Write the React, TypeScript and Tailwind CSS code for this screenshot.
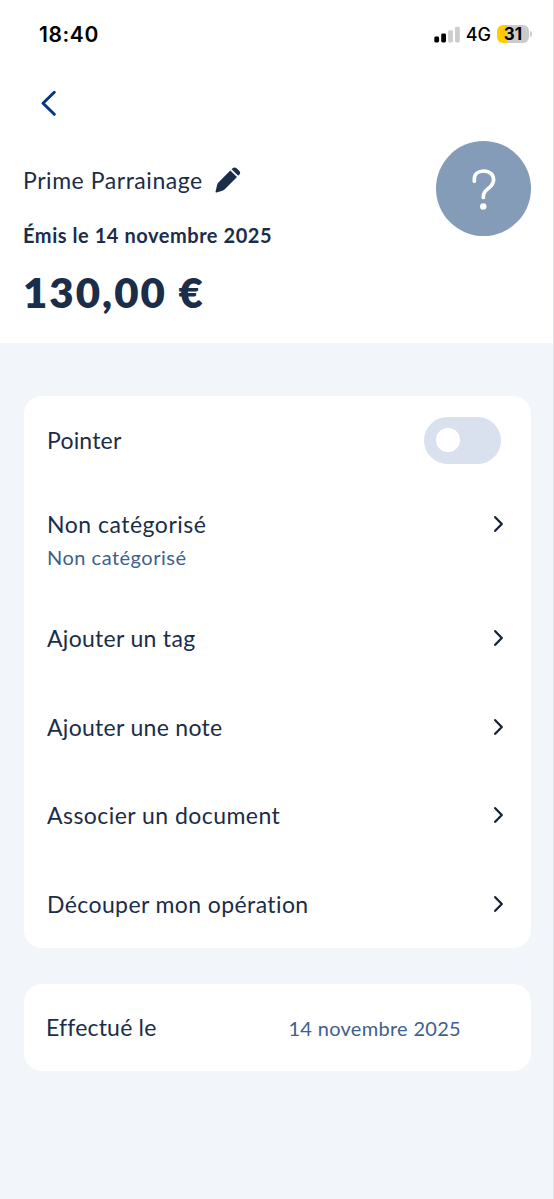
import React from 'react';

type Action = {
  label: string;
  detail?: string;
  rowClass: string;
  labelClass: string;
};

const actions: Action[] = [
  { label: 'Non catégorisé', detail: 'Non catégorisé', rowClass: 'h-[109.5px] items-start pt-[22px]', labelClass: 'tracking-[0.5px]' },
  { label: 'Ajouter un tag', rowClass: 'h-[88.5px] items-center', labelClass: 'tracking-[0.3px]' },
  { label: 'Ajouter une note', rowClass: 'h-[88.5px] items-center', labelClass: 'tracking-[0.3px]' },
  { label: 'Associer un document', rowClass: 'h-[88.5px] items-center', labelClass: 'tracking-[0.45px]' },
  { label: 'Découper mon opération', rowClass: 'h-[88.5px] items-center', labelClass: 'tracking-[0.4px]' },
];

const ChevronRight = () => (
  <svg width="12" height="18" viewBox="0 0 12 18" fill="none" className="shrink-0">
    <path d="M2.2 2.2 8.8 9l-6.6 6.8" stroke="#14223a" strokeWidth="2.3" strokeLinecap="round" strokeLinejoin="round" />
  </svg>
);

const StatusBar = () => (
  <div className="flex h-[68px] items-center justify-between pl-[39px] pr-[21px] font-['Inter',sans-serif] text-black">
    <span className="text-[21px] font-semibold leading-none tracking-[0.6px]">18:40</span>
    <div className="flex items-center">
      <svg width="26" height="17" viewBox="0 0 26 17">
        <rect x="0.3" y="10.5" width="4.8" height="6" rx="1.4" fill="#000" />
        <rect x="7.2" y="7.5" width="4.8" height="9" rx="1.4" fill="#000" />
        <rect x="14.1" y="4.3" width="4.8" height="12.2" rx="1.4" fill="#cdcdcd" />
        <rect x="21" y="0.8" width="4.8" height="15.7" rx="1.4" fill="#cdcdcd" />
      </svg>
      <span className="ml-[6px] mt-[2px] text-[18px] font-medium leading-none">4G</span>
      <div className="ml-[6px] flex items-center">
        <div className="flex h-[18px] w-[32px] items-center justify-center rounded-[6px] bg-[linear-gradient(to_right,#ffcc02_31%,#cbcbcb_31%)]">
          <span className="text-[17px] font-bold leading-none">31</span>
        </div>
        <div className="ml-[1px] h-[6px] w-[2px] rounded-r-full bg-[#cbcbcb]" />
      </div>
    </div>
  </div>
);

const Header = () => (
  <header className="h-[343px] bg-white">
    <StatusBar />
    <div className="flex h-[70px] items-center pl-[40px]">
      <svg width="18" height="28" viewBox="0 0 18 28" fill="none">
        <path d="M14.3 3.3 3 14.3l11.3 11" stroke="#003883" strokeWidth="3" strokeLinecap="round" strokeLinejoin="round" />
      </svg>
    </div>
    <div className="flex justify-between pl-[23px] pr-[22px] pt-[3px]">
      <div className="pt-[22px]">
        <div className="flex h-[34px] items-center">
          <h1 className="whitespace-nowrap text-[23px] leading-[34px] tracking-[0.55px]">Prime Parrainage</h1>
          <svg width="26" height="26" viewBox="0 0 26 26" fill="#1b2d48" className="ml-[12px]">
            <path d="M15.3 3.4 22 9.9 9.8 22.2Q8.5 23.4 6.6 24L1.6 25.4Q.4 25.6.6 24.4L1.9 18.8Q2.2 17 3.4 15.6Z" />
            <path d="m16.6 2.3 1-1q2-1.7 4-.1l2.8 2.7q1.5 1.8 0 3.7l-1.2 1.2Z" />
          </svg>
        </div>
        <p className="mt-[23px] whitespace-nowrap text-[20px] font-bold leading-[30px] tracking-[0.55px]">Émis le 14 novembre 2025</p>
        <p className="mt-[15px] whitespace-nowrap text-[42px] font-extrabold leading-[54px] tracking-[2px]">130,00 €</p>
      </div>
      <div className="flex size-[95px] items-center justify-center rounded-full bg-[#849cb8]">
        <svg width="26" height="44" viewBox="0 0 26 44" fill="none">
          <path d="M3.3 14.2v-2C3.3 6.8 7.2 4 12.6 4c5.8 0 10 3.6 10 8.8 0 3.9-2 6.1-5.2 8.6-3.4 2.7-5.1 4.4-5.1 9" stroke="#fff" strokeWidth="3.7" strokeLinecap="round" />
          <circle cx="12.3" cy="39.5" r="3.2" fill="#fff" />
        </svg>
      </div>
    </div>
  </header>
);

export default function App() {
  return (
    <div className="min-h-[1199px] w-[554px] border-r border-[#dfe1e5] bg-[#f2f5fa] font-['Lato',sans-serif] text-[#1b2d48]">
      <Header />
      <main className="flex flex-col gap-[36px] pl-[24px] pr-[22px] pt-[53px]">
        <section className="rounded-[18px] bg-white">
          {/* Toggle row */}
          <div className="flex h-[88.5px] items-center justify-between pl-[23px] pr-[30px]">
            <span className="text-[23px] tracking-[0.2px]">Pointer</span>
            <button className="flex h-[47px] w-[77px] items-center rounded-full bg-[#d8e1ed] pl-[12px]">
              <span className="size-[24px] rounded-full bg-white" />
            </button>
          </div>

          {actions.map((action, index) => (
            <div key={index} className={`flex justify-between pl-[23px] pr-[26px] ${action.rowClass}`}>
              <div>
                <p className={`whitespace-nowrap text-[23px] leading-[34px] ${action.labelClass}`}>{action.label}</p>
                {action.detail && (
                  <p className="text-[20px] leading-[32px] tracking-[0.5px] text-[#405f8d]">{action.detail}</p>
                )}
              </div>
              <div className="flex h-[34px] items-center">
                <ChevronRight />
              </div>
            </div>
          ))}
        </section>

        <section className="flex h-[87px] items-center justify-between rounded-[18px] bg-white pl-[22px] pr-[70px]">
          <span className="text-[23px] tracking-[0.2px]">Effectué le</span>
          <span className="text-[20px] tracking-[0.3px] text-[#405f8d]">14 novembre 2025</span>
        </section>
      </main>
    </div>
  );
}
